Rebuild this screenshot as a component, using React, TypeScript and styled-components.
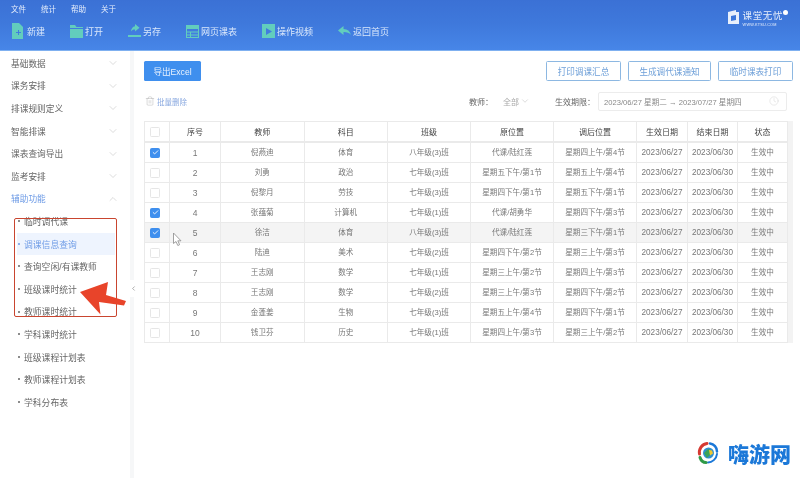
import styled, { createGlobalStyle } from 'styled-components'
import { ChevronDown, ChevronUp, ChevronLeft, Check, Trash2, Clock } from 'lucide-react'

const GlobalStyle = createGlobalStyle`
    html, body {
        margin: 0;
        padding: 0;
        background: #fff;
    }
    body {
        font-family: "Liberation Sans", "Noto Sans CJK SC", sans-serif;
    }
`

const Page = styled.div`
    position: relative;
    width: 800px;
    height: 478px;
    overflow: hidden;
    display: flex;
    flex-direction: column;
    background: #fff;
    filter: blur(0.45px);
`

const Header = styled.header`
    position: relative;
    height: 51px;
    flex-shrink: 0;
    background: linear-gradient(180deg, #3b71d5 0%, #3f79dc 50%, #4786e8 100%);
    border-bottom: 1px solid #7fb0f0;
    box-sizing: border-box;
`

const MenuBar = styled.nav`
    display: flex;
    gap: 15px;
    height: 17px;
    padding-left: 11px;
    align-items: center;
    color: #e6eefc;
    font-size: 7.5px;
`

const ToolBar = styled.div`
    display: flex;
    gap: 25px;
    padding: 5px 0 0 12px;
`

const ToolItem = styled.div`
    display: flex;
    align-items: center;
    gap: 2px;
    height: 18px;
    color: #dbe8fb;
    font-size: 9px;
    white-space: nowrap;
`

const Brand = styled.div`
    position: absolute;
    top: 10px;
    right: 17px;
    display: flex;
    gap: 4px;
    color: #e8effb;
`

const BrandText = styled.div`
    display: flex;
    flex-direction: column;
    align-items: flex-start;
    gap: 2px;
`

const BrandName = styled.span`
    font-size: 9.5px;
    line-height: 11px;
    letter-spacing: 0.6px;
`

const BrandUrl = styled.span`
    font-size: 3.8px;
    line-height: 4px;
    letter-spacing: 0.2px;
`

const BrandDot = styled.span`
    position: absolute;
    top: 0;
    right: -5px;
    width: 5px;
    height: 5px;
    border-radius: 50%;
    background: #fff;
`

const Body = styled.div`
    flex: 1;
    display: flex;
    min-height: 0;
`

const Sidebar = styled.aside`
    position: relative;
    width: 130px;
    flex-shrink: 0;
    padding-top: 1px;
    box-sizing: border-box;
    background: #fff;
`

const GroupRow = styled.div<{ $open?: boolean }>`
    display: flex;
    align-items: center;
    justify-content: space-between;
    height: 22.6px;
    padding: 0 11px;
    font-size: 8.7px;
    color: ${props => props.$open ? '#6f9ce6' : '#666'};
    svg {
        color: #b8b8b8;
    }
`

const SubRow = styled.div<{ $active?: boolean }>`
    position: relative;
    display: flex;
    align-items: center;
    height: 22.6px;
    margin: 0 15px 0 17px;
    padding-left: 7px;
    font-size: 8.8px;
    color: ${props => props.$active ? '#6f9ce6' : '#666'};
    background: ${props => props.$active ? '#eef4fe' : 'transparent'};
    &::before {
        content: '';
        position: absolute;
        left: 1px;
        top: 10px;
        width: 2px;
        height: 2px;
        border-radius: 50%;
        background: ${props => props.$active ? '#6f9ce6' : '#666'};
    }
`

const Divider = styled.div`
    position: relative;
    width: 4px;
    flex-shrink: 0;
    background: #f6f7f8;
`

const CollapseTab = styled.div`
    position: absolute;
    left: 0;
    top: 229px;
    width: 7px;
    height: 17px;
    display: flex;
    align-items: center;
    justify-content: center;
    background: #fff;
    border-radius: 0 3px 3px 0;
    color: #777;
`

const Main = styled.main`
    flex: 1;
    min-width: 0;
    padding: 10px 7px 0 10px;
`

const TopRow = styled.div`
    display: flex;
    justify-content: space-between;
    align-items: center;
    height: 20px;
`

const ExportButton = styled.button`
    width: 57px;
    height: 20px;
    padding: 0;
    border: none;
    border-radius: 1.5px;
    background: #3f8fee;
    color: #eaf3fe;
    font: inherit;
    font-size: 8.6px;
`

const ActionGroup = styled.div`
    display: flex;
    gap: 7px;
`

const OutlineButton = styled.button<{ $width: number }>`
    width: ${props => props.$width}px;
    height: 20px;
    padding: 0;
    border: 1px solid #8db8e2;
    border-radius: 1.5px;
    background: #fff;
    color: #6d9fd8;
    font: inherit;
    font-size: 8.6px;
`

const FilterRow = styled.div`
    display: flex;
    align-items: center;
    height: 20px;
    margin-top: 10px;
    padding: 0 6px 0 1px;
    font-size: 8px;
    color: #666;
`

const BatchDelete = styled.div`
    display: flex;
    align-items: center;
    gap: 2px;
    margin-right: auto;
    font-size: 7.5px;
    color: #8aa9e0;
    svg {
        color: #aaa;
    }
`

const FilterValue = styled.div`
    display: flex;
    align-items: center;
    gap: 1px;
    margin: 0 25px 0 10px;
    color: #aaa;
`

const DateBox = styled.div`
    display: flex;
    align-items: center;
    justify-content: space-between;
    width: 189px;
    height: 19px;
    margin-left: 3px;
    padding: 0 7px 0 5px;
    box-sizing: border-box;
    border: 1px solid #ececec;
    border-radius: 2px;
    font-size: 7.6px;
    color: #888;
    svg {
        color: #d4d4d4;
    }
`

const TableWrap = styled.div`
    margin-top: 10px;
    padding-right: 6px;
    background: #f3f3f3;
`

const Table = styled.table`
    width: 643px;
    table-layout: fixed;
    border-collapse: collapse;
    background: #fff;
`

const Th = styled.th`
    height: 19px;
    padding: 0;
    border: 1px solid #eaeaea;
    border-bottom-width: 2px;
    font-size: 8px;
    font-weight: 400;
    color: #444;
    text-align: center;
    white-space: nowrap;
`

const Tr = styled.tr<{ $hover?: boolean }>`
    background: ${props => props.$hover ? '#f4f4f4' : '#fff'};
`

const Td = styled.td<{ $size?: number }>`
    height: 19px;
    padding: 0;
    border: 1px solid #eaeaea;
    font-size: ${props => props.$size || 7.6}px;
    line-height: 12px;
    color: #777;
    text-align: center;
    white-space: nowrap;
`

const Checkbox = styled.span<{ $checked?: boolean }>`
    display: inline-flex;
    align-items: center;
    justify-content: center;
    vertical-align: middle;
    width: 10px;
    height: 10px;
    margin-right: 4px;
    box-sizing: border-box;
    border-radius: 1.5px;
    border: 1px solid ${props => props.$checked ? '#3f8fee' : '#e6e6e6'};
    background: ${props => props.$checked ? '#3f8fee' : '#fff'};
    color: #fff;
`

const HighlightFrame = styled.div`
    position: absolute;
    left: 14px;
    top: 218px;
    width: 103px;
    height: 99px;
    box-sizing: border-box;
    border: 1.5px solid #c9452f;
    border-radius: 2px;
    pointer-events: none;
`

const Overlay = styled.svg`
    position: absolute;
    pointer-events: none;
`

const Watermark = styled.div`
    position: absolute;
    right: 9px;
    bottom: 13px;
    display: flex;
    align-items: center;
    gap: 9px;
`

const WatermarkText = styled.span`
    font-family: "Noto Sans CJK SC", sans-serif;
    font-size: 21px;
    line-height: 24px;
    font-weight: 900;
    color: #1b78d8;
`

const ICON = '#62cdbd'

const tools = [
    {
        label: '新建',
        icon: <path fillRule="evenodd" d="M0 0h7l4 4v12H0zM4 9h2V7h1v2h2v1H7v2H6v-2H4z" />,
    },
    {
        label: '打开',
        icon: <path d="M0 2h5l1.500 2H13v1H0zM0 6h13v9H0z" />,
    },
    {
        label: '另存',
        icon: <path d="M7 1l4.500 3.800L7 8.600V6.400C5 6.400 3.800 7 3 8.500 3.200 5.600 4.700 3.600 7 3.300zM0 12h13v2H0z" />,
    },
    {
        label: '网页课表',
        icon: <path fillRule="evenodd" d="M0 2h13v13H0zM1 6v2.400h11V6zM1 9.400v2.200h3V9.400zM5 9.400v2.200h7V9.400zM1 12.600V14h3v-1.400zM5 12.600V14h7v-1.400z" />,
    },
    {
        label: '操作视频',
        icon: <path fillRule="evenodd" d="M0 1h13v14H0zM4 5v7l6-3.500z" />,
    },
    {
        label: '返回首页',
        icon: <path d="M5.500 3v3C9.500 6 12 8 13 12c-1.800-2.200-4-3-7.500-3v3L0 7.500z" />,
    },
]

const groups = ['基础数据', '课务安排', '排课规则定义', '智能排课', '课表查询导出', '监考安排']

const subItems = [
    '临时调代课', '调课信息查询', '查询空闲/有课教师', '班级课时统计', '教师课时统计',
    '学科课时统计', '班级课程计划表', '教师课程计划表', '学科分布表',
]

const columns = [
    { title: '序号', width: 51 },
    { title: '教师', width: 83.5 },
    { title: '科目', width: 83.5 },
    { title: '班级', width: 83 },
    { title: '原位置', width: 83 },
    { title: '调后位置', width: 83 },
    { title: '生效日期', width: 51 },
    { title: '结束日期', width: 50 },
    { title: '状态', width: 50 },
]

const rows = [
    { teacher: '倪燕迪', subject: '体育', grade: '八年级(3)班', from: '代课/陆红莲', to: '星期四上午/第4节', checked: true },
    { teacher: '刘勇', subject: '政治', grade: '七年级(3)班', from: '星期五下午/第1节', to: '星期五上午/第4节' },
    { teacher: '倪黎月', subject: '劳技', grade: '七年级(3)班', from: '星期四下午/第1节', to: '星期五下午/第1节' },
    { teacher: '张蕴菊', subject: '计算机', grade: '七年级(1)班', from: '代课/胡勇华', to: '星期四下午/第3节', checked: true },
    { teacher: '徐洁', subject: '体育', grade: '八年级(3)班', from: '代课/陆红莲', to: '星期三下午/第1节', checked: true, hover: true },
    { teacher: '陆迪', subject: '美术', grade: '七年级(2)班', from: '星期四下午/第2节', to: '星期三上午/第3节' },
    { teacher: '王志刚', subject: '数学', grade: '七年级(1)班', from: '星期三上午/第2节', to: '星期四上午/第3节' },
    { teacher: '王志刚', subject: '数学', grade: '七年级(2)班', from: '星期三上午/第3节', to: '星期四下午/第2节' },
    { teacher: '金蓬姜', subject: '生物', grade: '七年级(3)班', from: '星期五上午/第4节', to: '星期四下午/第1节' },
    { teacher: '钱卫芬', subject: '历史', grade: '七年级(1)班', from: '星期四上午/第3节', to: '星期三上午/第2节' },
]

export default function App() {
    return (
        <Page>
            <GlobalStyle />
            <Header>
                <MenuBar>
                    <span>文件</span>
                    <span>统计</span>
                    <span>帮助</span>
                    <span>关于</span>
                </MenuBar>
                <ToolBar>
                    {tools.map(tool => (
                        <ToolItem key={tool.label}>
                            <svg width="13" height="16" viewBox="0 0 13 16" fill={ICON}>
                                {tool.icon}
                            </svg>
                            <span>{tool.label}</span>
                        </ToolItem>
                    ))}
                </ToolBar>
                <Brand>
                    <svg width="11" height="14" viewBox="0 0 11 14" fill="#e8effb">
                        <path fillRule="evenodd" d="M0 2l8-2v2h3v12H0zM3 6v5l5-1V5z" />
                    </svg>
                    <BrandText>
                        <BrandName>课堂无忧</BrandName>
                        <BrandUrl>WWW.KTSU.COM</BrandUrl>
                    </BrandText>
                    <BrandDot />
                </Brand>
            </Header>
            <Body>
                <Sidebar>
                    {groups.map(group => (
                        <GroupRow key={group}>
                            <span>{group}</span>
                            <ChevronDown size={12} strokeWidth={1} />
                        </GroupRow>
                    ))}
                    <GroupRow $open>
                        <span>辅助功能</span>
                        <ChevronUp size={12} strokeWidth={1} />
                    </GroupRow>
                    {subItems.map(item => (
                        <SubRow key={item} $active={item === '调课信息查询'}>{item}</SubRow>
                    ))}
                </Sidebar>
                <Divider>
                    <CollapseTab>
                        <ChevronLeft size={7} strokeWidth={2} />
                    </CollapseTab>
                </Divider>
                <Main>
                    <TopRow>
                        <ExportButton>导出Excel</ExportButton>
                        <ActionGroup>
                            <OutlineButton $width={75}>打印调课汇总</OutlineButton>
                            <OutlineButton $width={83}>生成调代课通知</OutlineButton>
                            <OutlineButton $width={75}>临时课表打印</OutlineButton>
                        </ActionGroup>
                    </TopRow>
                    <FilterRow>
                        <BatchDelete>
                            <Trash2 size={10} strokeWidth={1} />
                            <span>批量删除</span>
                        </BatchDelete>
                        <span>教师：</span>
                        <FilterValue>
                            <span>全部</span>
                            <ChevronDown size={10} strokeWidth={1} />
                        </FilterValue>
                        <span>生效期限：</span>
                        <DateBox>
                            <span>2023/06/27 星期二 → 2023/07/27 星期四</span>
                            <Clock size={10} strokeWidth={1.2} />
                        </DateBox>
                    </FilterRow>
                    <TableWrap>
                        <Table>
                            <colgroup>
                                <col style={{ width: 25 }} />
                                {columns.map(column => (
                                    <col key={column.title} style={{ width: column.width }} />
                                ))}
                            </colgroup>
                            <thead>
                                <tr>
                                    <Th><Checkbox /></Th>
                                    {columns.map(column => (
                                        <Th key={column.title}>{column.title}</Th>
                                    ))}
                                </tr>
                            </thead>
                            <tbody>
                                {rows.map((row, index) => (
                                    <Tr key={index} $hover={row.hover}>
                                        <Td>
                                            <Checkbox $checked={row.checked}>
                                                {row.checked && <Check size={7} strokeWidth={3} />}
                                            </Checkbox>
                                        </Td>
                                        <Td $size={8.5}>{index + 1}</Td>
                                        <Td>{row.teacher}</Td>
                                        <Td>{row.subject}</Td>
                                        <Td>{row.grade}</Td>
                                        <Td>{row.from}</Td>
                                        <Td>{row.to}</Td>
                                        <Td $size={8.2}>2023/06/27</Td>
                                        <Td $size={8.2}>2023/06/30</Td>
                                        <Td>生效中</Td>
                                    </Tr>
                                ))}
                            </tbody>
                        </Table>
                    </TableWrap>
                </Main>
            </Body>
            <HighlightFrame />
            <Overlay style={{ left: 78, top: 280 }} width="50" height="36" viewBox="78 280 50 36">
                <path d="M80 292L108 282L106 295L126 301L124 305.500L99 302L100.500 314.500z" fill="#e8442a" strokeLinejoin="round" />
            </Overlay>
            <Overlay style={{ left: 172, top: 232 }} width="11" height="15" viewBox="0 0 11 15">
                <path d="M1.500 1v10.500l2.500-2 1.800 4 1.800-.8-1.800-3.900h3.200z" fill="#fff" stroke="#8a8a8a" strokeWidth="0.8" strokeLinejoin="round" />
            </Overlay>
            <Watermark>
                <svg width="22" height="24" viewBox="0 0 22 24" fill="none">
                    <path d="M2.500 13C1.500 8 5 3 10 2.500" stroke="#d63a32" strokeWidth="3" strokeLinecap="round" />
                    <path d="M13 2.500c4 .5 7 4 7 8" stroke="#1b78d8" strokeWidth="2.500" strokeLinecap="round" />
                    <path d="M20 13c-.5 5-5 8.500-9 8.500" stroke="#1b78d8" strokeWidth="2" strokeLinecap="round" />
                    <path d="M9 21.500c-3 0-5-2-6-5" stroke="#2f9a47" strokeWidth="3" strokeLinecap="round" />
                    <circle cx="11.500" cy="12" r="5.500" fill="#2f8fd0" />
                    <path d="M7 12l4-4 3 1-1 5-3 3z" fill="#3aa35a" />
                    <path d="M12 9l3 .5 1 3-3 2z" fill="#f0c830" />
                </svg>
                <WatermarkText>嗨游网</WatermarkText>
            </Watermark>
        </Page>
    )
}
